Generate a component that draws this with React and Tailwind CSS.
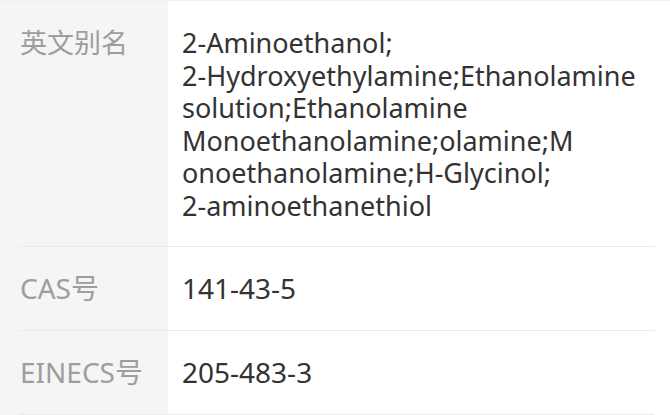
const rows = [
  {
    label: '英文别名',
    lines: [
      '2-Aminoethanol;',
      '2-Hydroxyethylamine;Ethanolamine',
      'solution;Ethanolamine',
      'Monoethanolamine;olamine;M',
      'onoethanolamine;H-Glycinol;',
      '2-aminoethanethiol',
    ],
    box: 'pt-[26px] pb-[23px] text-[27px] leading-[32.6px]',
  },
  { label: 'CAS号', lines: ['141-43-5'], box: 'pt-[25px] pb-[25px] text-[28px] leading-[33px]' },
  { label: 'EINECS号', lines: ['205-483-3'], box: 'pt-[25px] pb-[25px] text-[28px] leading-[33px]' },
]

export default function App() {
  return (
    <div
      className="min-h-[415px] w-[670px] border-t border-[#f0f0f0] bg-[linear-gradient(to_right,#f5f5f5_168px,#ffffff_168px)]"
      style={{ fontFamily: '"Noto Sans", "Noto Sans CJK SC", sans-serif' }}
    >
      {rows.map((row) => (
        <div key={row.label} className={`ml-[18px] mr-[15px] flex border-b border-[#ebebeb] ${row.box}`}>
          <div className="w-[150px] shrink-0 pl-[2px] text-[#9e9e9e]">{row.label}</div>
          <div className="whitespace-nowrap pl-[14px] text-[#333333]">
            {row.lines.map((line) => (
              <div key={line}>{line}</div>
            ))}
          </div>
        </div>
      ))}
    </div>
  )
}
